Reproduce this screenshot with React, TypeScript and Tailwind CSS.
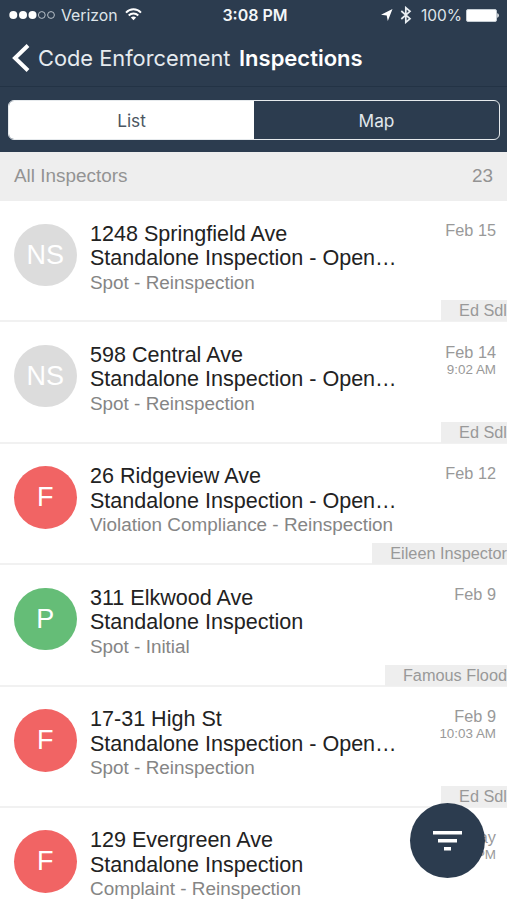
import { ReactNode } from "react";

type Inspection = {
  address: string;
  title: string;
  type: string;
  status: "NS" | "F" | "P";
  date: string;
  time?: string;
  inspector?: string;
};

const inspections: Inspection[] = [
  {
    address: "1248 Springfield Ave",
    title: "Standalone Inspection - Open…",
    type: "Spot - Reinspection",
    status: "NS",
    date: "Feb 15",
    inspector: "Ed Sdl",
  },
  {
    address: "598 Central Ave",
    title: "Standalone Inspection - Open…",
    type: "Spot - Reinspection",
    status: "NS",
    date: "Feb 14",
    time: "9:02 AM",
    inspector: "Ed Sdl",
  },
  {
    address: "26 Ridgeview Ave",
    title: "Standalone Inspection - Open…",
    type: "Violation Compliance - Reinspection",
    status: "F",
    date: "Feb 12",
    inspector: "Eileen Inspector",
  },
  {
    address: "311 Elkwood Ave",
    title: "Standalone Inspection",
    type: "Spot - Initial",
    status: "P",
    date: "Feb 9",
    inspector: "Famous Flood",
  },
  {
    address: "17-31 High St",
    title: "Standalone Inspection - Open…",
    type: "Spot - Reinspection",
    status: "F",
    date: "Feb 9",
    time: "10:03 AM",
    inspector: "Ed Sdl",
  },
  {
    address: "129 Evergreen Ave",
    title: "Standalone Inspection",
    type: "Complaint - Reinspection",
    status: "F",
    date: "Today",
    time: "1:00 PM",
  },
];

const statusColors = {
  NS: "bg-[#dcdcdc]",
  F: "bg-[#f16464]",
  P: "bg-[#65bd77]",
};

function StatusBar() {
  return (
    <div className="grid h-[30px] grid-cols-[1fr_auto_1fr] items-center pl-[9px] pr-[8px] text-[16px] leading-none">
      <div className="flex items-center">
        <svg width="47" height="10" viewBox="0 0 47 10" className="shrink-0">
          <circle cx="4.3" cy="5" r="4" fill="#fff" />
          <circle cx="14" cy="5" r="4" fill="#fff" />
          <circle cx="23.5" cy="5" r="4" fill="#fff" />
          <circle cx="32.8" cy="5" r="3.4" fill="none" stroke="#b8c1c9" />
          <circle cx="42" cy="5" r="3.4" fill="none" stroke="#b8c1c9" />
        </svg>
        <span className="ml-[5px] w-[57px] pt-px text-[15.800px] text-[#dfe5ea]">Verizon</span>
        <svg width="17" height="13" viewBox="0 0 17 13" className="ml-[7px]" fill="none" stroke="#fff" strokeWidth="1.9">
          <path d="M1 4.600C5.200 .2 11.800 .2 16 4.600" />
          <path d="M3.700 7.500C6.400 4.800 10.600 4.800 13.300 7.500" />
          <path d="M8.500 12.300L5.900 9.500C7.400 8.100 9.600 8.100 11.100 9.500Z" fill="#fff" stroke="none" />
        </svg>
      </div>
      <div className="ml-[2px] font-semibold text-[#f3f6f8]">3:08 PM</div>
      <div className="flex items-center justify-end">
        <svg width="13" height="12" viewBox="0 0 13 12" fill="#fff">
          <path d="M12.500 0L7.800 12L6.700 6.500L1 5.800Z" />
        </svg>
        <svg width="12" height="18" viewBox="0 0 12 18" className="ml-[7px]" fill="none" stroke="#e9eef2" strokeWidth="1.700">
          <path d="M1.300 5L10 12.700L5.800 16.300V1.700L10 5.300L1.300 13" />
        </svg>
        <span className="ml-[9px] w-[41px] whitespace-nowrap pt-px text-[15.500px] text-[#dfe5ea]">100%</span>
        <svg width="33" height="13" viewBox="0 0 33 13" className="ml-[4px]">
          <rect x=".5" y=".5" width="30" height="12" rx="1.500" fill="#fff" stroke="#c5cdd4" />
          <path d="M31.300 4.300C33.300 4.800 33.300 8.200 31.300 8.700Z" fill="#fff" />
        </svg>
      </div>
    </div>
  );
}

function Segment({ active, children }: { active?: boolean; children: ReactNode }) {
  return (
    <button
      className={`flex-1 pt-px text-[17.300px] ${active ? "bg-white text-[#4b5661]" : "text-[#e2e8ec]"}`}
    >
      {children}
    </button>
  );
}

function Header() {
  return (
    <header className="h-[152px] bg-[#2c3c4f] font-[Inter,sans-serif]">
      <StatusBar />
      <div className="flex h-[57px] items-center border-b border-[#233345] pl-3">
        <svg width="19" height="28" viewBox="0 0 19 28" fill="none" stroke="#fff" strokeWidth="4">
          <path d="M16 1.500L3 14L16 26.500" />
        </svg>
        <span className="ml-[7px] w-[201px] whitespace-nowrap text-[21.800px] text-[#e6ebef]">
          Code Enforcement
        </span>
        <h1 className="whitespace-nowrap text-[22px] font-semibold text-white">Inspections</h1>
      </div>
      <div className="ml-[8px] mr-[7px] mt-[13px] flex h-10 overflow-hidden rounded-[6px] border-[1.500px] border-[#e6eaed]">
        <Segment active>List</Segment>
        <Segment>Map</Segment>
      </div>
    </header>
  );
}

function InspectionRow({ item }: { item: Inspection }) {
  return (
    <li className="relative flex h-[121.400px] border-b-2 border-[#f1f1f1] pl-[14px] pr-[11px]">
      <div
        className={`mt-[22.500px] flex size-[62.500px] shrink-0 items-center justify-center rounded-full text-[27px] text-white ${statusColors[item.status]}`}
      >
        {item.status}
      </div>
      <div className="ml-[13.500px] mt-[20.500px] flex-1 whitespace-nowrap text-[21.550px] leading-[24.500px] text-[#222]">
        <p>{item.address}</p>
        <p>{item.title}</p>
        <p className="text-[18.900px] leading-[24px] text-[#858585]">{item.type}</p>
      </div>
      <div className="mt-[19.300px] whitespace-nowrap text-right text-[16.300px] leading-[20px] text-[#999]">
        <p>{item.date}</p>
        {item.time && <p className="text-[13.400px] leading-[16px]">{item.time}</p>}
      </div>
      {/* inspector tag sits in the corner of the row */}
      {item.inspector && (
        <span className="absolute -bottom-px right-0 h-[21px] whitespace-nowrap bg-[#eee] pl-[18px] text-[16.300px] leading-[21px] text-[#999]">
          {item.inspector}
        </span>
      )}
    </li>
  );
}

export default function App() {
  return (
    <div className="relative h-[900px] w-[507px] overflow-hidden bg-white font-['Liberation_Sans',Arial,sans-serif]">
      <Header />
      <div className="flex h-[49px] items-center justify-between bg-[#eee] pl-[14px] pr-[14px] text-[18.900px] text-[#939393]">
        <span>All Inspectors</span>
        <span>23</span>
      </div>
      <ul>
        {inspections.map((item) => (
          <InspectionRow key={item.address} item={item} />
        ))}
      </ul>
      <button className="absolute left-[410px] top-[803px] flex size-[75px] items-center justify-center rounded-full bg-[#2c3c4f]">
        <svg width="29" height="20" viewBox="0 0 29 20" fill="#fff">
          <path d="M0 0H29V3.500H0ZM5 8H24V11.500H5ZM11 16H18V19.500H11Z" />
        </svg>
      </button>
    </div>
  );
}
